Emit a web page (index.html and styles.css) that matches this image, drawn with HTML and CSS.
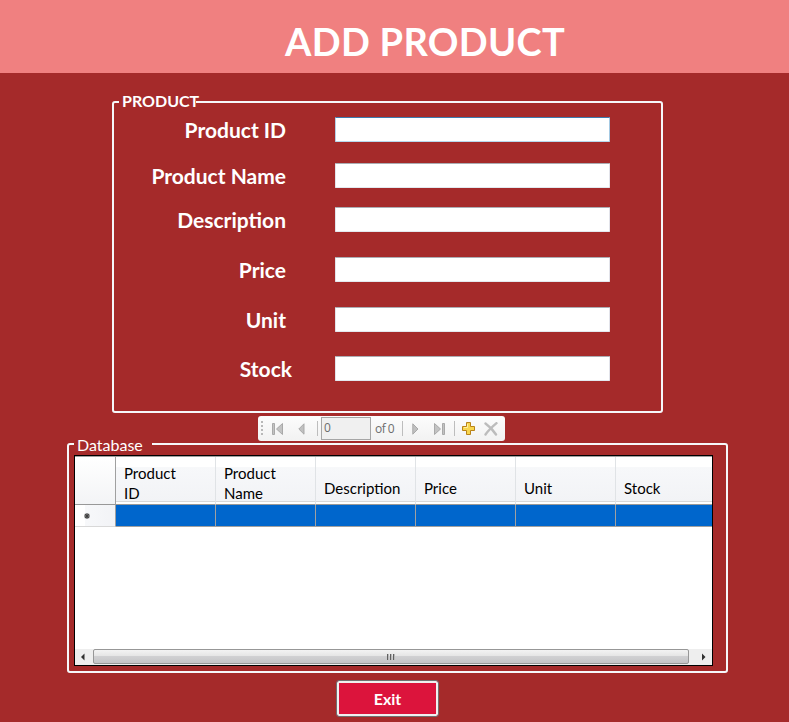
FILE: index.html
```html
<!DOCTYPE html>
<html lang="en">
<head>
<meta charset="utf-8">
<title>Add Product</title>
<link rel="stylesheet" href="styles.css">
</head>
<body>
<header class="banner"><h1>ADD PRODUCT</h1></header>
<main>
  <section class="group product">
    <h2 class="caption product-caption"><span>PRODUCT</span></h2>
    <form class="fields">
      <label class="row r1"><span class="l-id">Product ID</span><input class="focused" type="text"></label>
      <label class="row r2"><span class="l-name">Product Name</span><input type="text"></label>
      <label class="row r3"><span class="l-desc">Description</span><input type="text"></label>
      <label class="row r4"><span class="l-price">Price</span><input type="text"></label>
      <label class="row r5"><span class="l-unit">Unit</span><input type="text"></label>
      <label class="row r6"><span class="l-stock">Stock</span><input type="text"></label>
    </form>
  </section>

  <nav class="toolbar">
    <svg class="grip" width="3" height="15" viewBox="0 0 3 15"><path d="M0 0h2v2H0zM0 4h2v2H0zM0 8h2v2H0zM0 12h2v2H0z" fill="#b8b8b8"/></svg>
    <svg class="first" width="11" height="12" viewBox="0 0 11 12"><path d="M.5.5h2v11h-2zM10.500.5v11L4.500 6z" fill="#c3c3c3" stroke="#a9a9a9"/></svg>
    <svg class="prev" width="7" height="12" viewBox="0 0 7 12"><path d="M6 .8v10.400L.8 6z" fill="#c0c0c0" stroke="#a9a9a9"/></svg>
    <i class="sep s1"></i>
    <span class="position">0</span>
    <span class="count">of 0</span>
    <i class="sep s2"></i>
    <svg class="next" width="7" height="12" viewBox="0 0 7 12"><path d="M.8.8v10.400L6 6z" fill="#c0c0c0" stroke="#a9a9a9"/></svg>
    <svg class="last" width="11" height="12" viewBox="0 0 11 12"><path d="M8.500.5h2v11h-2zM.5.5v11L6.500 6z" fill="#c3c3c3" stroke="#a9a9a9"/></svg>
    <i class="sep s3"></i>
    <svg class="plus" width="13" height="13" viewBox="0 0 13 13"><path d="M4.500.5h4v4h4v4h-4v4h-4v-4h-4v-4h4z" fill="#f8d64e" stroke="#b98318"/><path d="M5.500 2v3.500H2" fill="none" stroke="#fff0a0"/></svg>
    <svg class="delete" width="14" height="14" viewBox="0 0 14 14"><path d="M1.500 1.500C5 4 9 8 12 12.500M12.500 1.200C8 5 4 9 1.500 12.500" fill="none" stroke="#bcbcbc" stroke-width="2.400" stroke-linecap="round"/></svg>
  </nav>

  <section class="group database">
    <h2 class="caption database-caption"><span>Database</span></h2>
    <div class="datagrid">
      <div class="table">
        <div class="head corner"></div>
        <div class="head"><span class="h-pr">Product</span><br><span class="h-id">ID</span></div>
        <div class="head"><span class="h-pr">Product</span><br><span class="h-nm">Name</span></div>
        <div class="head"><span class="h-de">Description</span></div>
        <div class="head"><span class="h-pc">Price</span></div>
        <div class="head"><span class="h-un">Unit</span></div>
        <div class="head"><span class="h-st">Stock</span></div>
        <div class="rowhead"><svg width="6" height="6" viewBox="0 0 6 6"><path d="M3 0v6M0 3h6M.8.8l4.400 4.400M5.200.8L.8 5.200" stroke="#404040" stroke-width="1.100"/></svg></div>
        <div class="cell"></div><div class="cell"></div><div class="cell"></div>
        <div class="cell"></div><div class="cell"></div><div class="cell"></div>
      </div>
      <div class="scrollbar">
        <svg width="18" height="16" viewBox="0 0 18 16"><path d="M9.500 4.500v7L6 8z" fill="#303030"/></svg>
        <div class="thumb"><svg width="9" height="8" viewBox="0 0 9 8"><path d="M.5 1v6M3.500 1v6M6.500 1v6" stroke="#606060"/><path d="M1.500 1v6M4.500 1v6M7.500 1v6" stroke="#bbb"/></svg></div>
        <svg width="23" height="16" viewBox="0 0 23 16"><path d="M13 4.500v7L16.500 8z" fill="#303030"/></svg>
      </div>
    </div>
  </section>

  <button class="exit" type="button"><span>Exit</span></button>
</main>
</body>
</html>
```
FILE: styles.css
```css
* { box-sizing: border-box; }
body {
  margin: 0;
  height: 722px;
  overflow: hidden;
  background: #a52a2a;
  color: #fff;
  font-family: "Century Gothic", "URW Gothic", Lato, sans-serif;
}
h1, h2 { margin: 0; }
svg { display: block; flex: none; }
.banner { height: 73px; background: #f08080; padding: 17px 0 0 285px; }
h1 { font-size: 38px; line-height: 48px; font-weight: 700; white-space: nowrap; letter-spacing: .3px; }
main { display: flex; flex-direction: column; }

.group { border: 2px solid #fff; border-radius: 3px; }
.caption { width: max-content; background: #a52a2a; line-height: 20px; }
.caption span { display: block; white-space: nowrap; }
.product { margin: 28px 0 0 112px; width: 551px; height: 312px; border-color: #e2e8ee #e4ebf2 #fff #fff; box-shadow: inset 0 1px #a52a2a; }
.product { box-shadow: none; border-color: #f6f8fa; }
.product-caption { margin: -12px 0 0 5px; padding: 0 3px; font-size: 16px; font-weight: 700; width: 77px; height: 20px; }
.fields { display: flex; flex-direction: column; padding-top: 6px; }
.row { display: flex; height: 25px; align-items: center; }
.row span { width: 172px; margin-right: 49px; text-align: right; font-size: 21px; line-height: 25px; font-weight: 700; white-space: nowrap; }
.row .l-stock { width: 178px; margin-right: 43px; }
.row input {
  width: 275px; height: 25px; padding: 2px 4px;
  border: 1px solid; border-color: #abadb3 #e2e3ea #e3e9ef #e2e3ea;
  border-radius: 1px; background: #fff; outline: 0; font: 16px Lato, sans-serif;
}
.row .focused { border-color: #3d7bad #a4c9e3 #b7d9ed #b5cfe7; }
.r2 { margin-top: 21px; }
.r3 { margin-top: 19px; }
.r4, .r5 { margin-top: 25px; }
.r6 { margin-top: 24px; }

.toolbar {
  display: flex; align-items: center; width: 247px; height: 25px;
  margin: 3px 0 0 258px; padding-left: 3px; border-radius: 3px;
  background: linear-gradient(#fcfcfc, #f2f2f2);
  color: #6d6d6d; font: 12px/23px "Segoe UI", "Open Sans", sans-serif;
}
.first { margin-left: 8px; }
.prev { margin-left: 15px; }
.sep { width: 1px; height: 15px; background: #bdbdbd; }
.s1 { margin-left: 12px; }
.position { width: 50px; height: 23px; margin-left: 3px; padding-left: 2px; border: 1px solid #a6a6a6; background: #f0f0f0; line-height: 20px; }
.count { width: 20px; margin-left: 4px; white-space: nowrap; letter-spacing: -.5px; }
.s2 { margin-left: 7px; }
.next { margin-left: 9px; }
.last { margin-left: 15px; }
.s3 { margin-left: 9px; }
.plus { margin-left: 7px; }
.delete { margin-left: 9px; }

.database { margin: 2px 0 0 67px; width: 661px; height: 230px; border-color: #f6f8fa; }
.database-caption { width: 78px; height: 20px; margin: -10px 0 0 5px; padding: 0 3px; font-size: 16px; font-weight: 400; }
.datagrid { width: 639px; height: 211px; margin-left: 5px; border: 1px solid #000; background: #fff; display: flex; flex-direction: column; overflow: hidden; }
.table { display: grid; grid-template-columns: 41px repeat(5, 100px) 96px; grid-template-rows: 48px 22px; border-top: 1px solid #a0a0a0; height: 193px; width: 637px; overflow: hidden; align-content: start; flex: none; }
.head {
  display: flex; flex-wrap: wrap; align-content: center; padding: 0 0 0 8px;
  color: #000; font-size: 15px; line-height: 20px;
  border-right: 1px solid #e0e3e6; border-bottom: 1px solid #989898;
  background: linear-gradient(#d8d8d8, #d8d8d8) 0 44px / 100% 1px no-repeat, linear-gradient(#fff 0 10px, #f7f8fa 10px, #f2f3f6 44px, #fff 45px);
}
.head { display: block; padding-top: 4px; white-space: nowrap; }
.head > span:only-child { display: block; padding-top: 10px; }
.corner { border-right-color: #a0a0a0; background: linear-gradient(#fff, #f3f4f6); }
.rowhead { display: flex; align-items: center; padding-left: 9px; border-right: 1px solid #a0a0a0; border-bottom: 1px solid #d8d8d8; background: linear-gradient(90deg, #fff 0 10px, #f7f8fa 10px, #f2f3f6); }
.cell { background: #0066cc; border-right: 1px solid #a0a0a0; border-bottom: 1px solid #a0a0a0; }
.head:nth-child(7), .cell:last-child { border-right: 0; }
.scrollbar { display: flex; height: 16px; background: #eee; flex: none; }
.thumb { flex: 1; height: 15px; display: flex; align-items: center; justify-content: center; border: 1px solid #979797; border-radius: 2px; background: linear-gradient(#f3f3f3 0, #e5e5e5 45%, #d0d0d2 50%, #c4c4c6); }

.exit {
  width: 103px; height: 37px; margin: 7px 0 0 336px; padding: 0;
  border: 1px solid #707070; border-radius: 3px; background: #dc143c;
  box-shadow: inset 0 0 0 2px #f0f0f0; color: #fff;
  font: 700 16px/33px "Century Gothic", "URW Gothic", Lato, sans-serif;
}
```
